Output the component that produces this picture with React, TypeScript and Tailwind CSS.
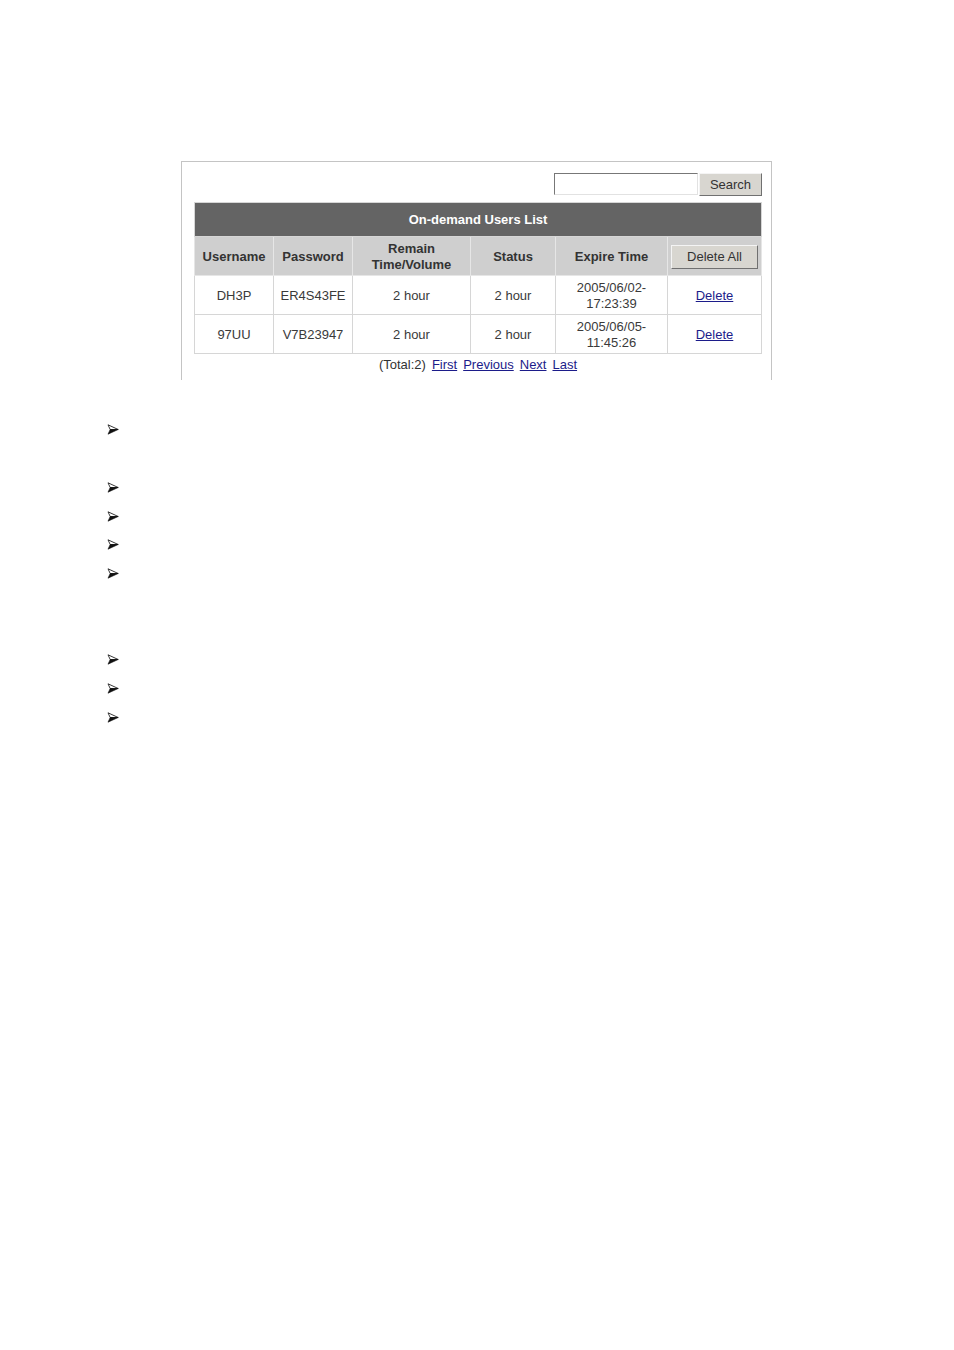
import React from "react";

const rows = [
  { user: "DH3P", pass: "ER4S43FE", remain: "2 hour", status: "2 hour", date: "2005/06/02-", time: "17:23:39" },
  { user: "97UU", pass: "V7B23947", remain: "2 hour", status: "2 hour", date: "2005/06/05-", time: "11:45:26" },
];

// bullets; false = blank line between them
const bullets = [true, false, true, true, true, true, false, false, true, true, true];

function Arrow() {
  return (
    <svg width="12" height="11" viewBox="0 0 12 11" className="block">
      <polygon points="1,0.8 11.2,5.5 3.2,5.5" fill="#fff" stroke="#222" strokeWidth="0.9" strokeLinejoin="round" />
      <polygon points="3.2,5.5 11.2,5.5 1,10.2" fill="#111" stroke="#111" strokeWidth="0.6" strokeLinejoin="round" />
    </svg>
  );
}

const th = "border border-[#e6e6e6] bg-[#cfcfcf] pt-[2px] text-[13px] font-bold text-[#333] leading-[16px] text-center";
const td = "border border-[#d6d6d6] bg-white pt-[2px] text-[13px] text-[#3a3a3a] leading-[16px] text-center";

export default function App() {
  return (
    <div className="min-h-[1350px] w-[954px] bg-white pt-[161px] font-['Liberation_Sans',Arial,sans-serif]">
      <div className="ml-[181px] h-[219px] w-[591px] border-x border-t border-[#c4c4c4] pl-[12px] pr-[9px] pt-[11px]">
        <div className="flex justify-end">
          <input className="h-[22px] w-[144px] border border-t-[#777] border-l-[#777] border-r-[#e2e2e2] border-b-[#e2e2e2] bg-white outline-none" />
          <button className="ml-[1px] h-[23px] w-[63px] border border-t-[#f4f4f4] border-l-[#f4f4f4] border-r-[#707070] border-b-[#707070] bg-[#d8d6d0] text-[13px] text-[#333]">
            Search
          </button>
        </div>
        <table className="mt-[6px] w-[567px] table-fixed border-collapse border border-[#d0d0d0]">
          <colgroup>
            <col className="w-[79px]" />
            <col className="w-[79px]" />
            <col className="w-[118px]" />
            <col className="w-[85px]" />
            <col className="w-[112px]" />
            <col className="w-[94px]" />
          </colgroup>
          <thead>
            <tr>
              <th colSpan={6} className="h-[34px] border border-[#d6d6d6] bg-[#646464] text-[13px] font-bold text-white">
                On-demand Users List
              </th>
            </tr>
            <tr className="h-[39px]">
              <th className={th}>Username</th>
              <th className={th}>Password</th>
              <th className={th}>
                Remain
                <br />
                Time/Volume
              </th>
              <th className={th}>Status</th>
              <th className={th}>Expire Time</th>
              <th className={th}>
                <button className="h-[24px] w-[87px] border border-t-[#f4f4f4] border-l-[#f4f4f4] border-r-[#707070] border-b-[#707070] bg-[#d8d6d0] text-[13px] font-normal text-[#333]">
                  Delete All
                </button>
              </th>
            </tr>
          </thead>
          <tbody>
            {rows.map((r) => (
              <tr key={r.user} className="h-[39px]">
                <td className={td}>{r.user}</td>
                <td className={td}>{r.pass}</td>
                <td className={td}>{r.remain}</td>
                <td className={td}>{r.status}</td>
                <td className={td}>
                  {r.date}
                  <br />
                  {r.time}
                </td>
                <td className={td}>
                  <a href="#" className="text-[#1c1c8a] underline">
                    Delete
                  </a>
                </td>
              </tr>
            ))}
          </tbody>
        </table>
        <div className="mt-[3px] flex justify-center gap-[6px] text-[13px] leading-[16px] text-[#333]">
          <span>(Total:2)</span>
          <a href="#" className="text-[#1c1c8a] underline">First</a>
          <a href="#" className="text-[#1c1c8a] underline">Previous</a>
          <a href="#" className="text-[#1c1c8a] underline">Next</a>
          <a href="#" className="text-[#1c1c8a] underline">Last</a>
        </div>
      </div>
      <ul className="mt-[35.6px] pl-[107px]">
        {bullets.map((b, i) => (
          <li key={i} className="flex h-[28.75px] items-center">
            {b ? <Arrow /> : null}
          </li>
        ))}
      </ul>
    </div>
  );
}
